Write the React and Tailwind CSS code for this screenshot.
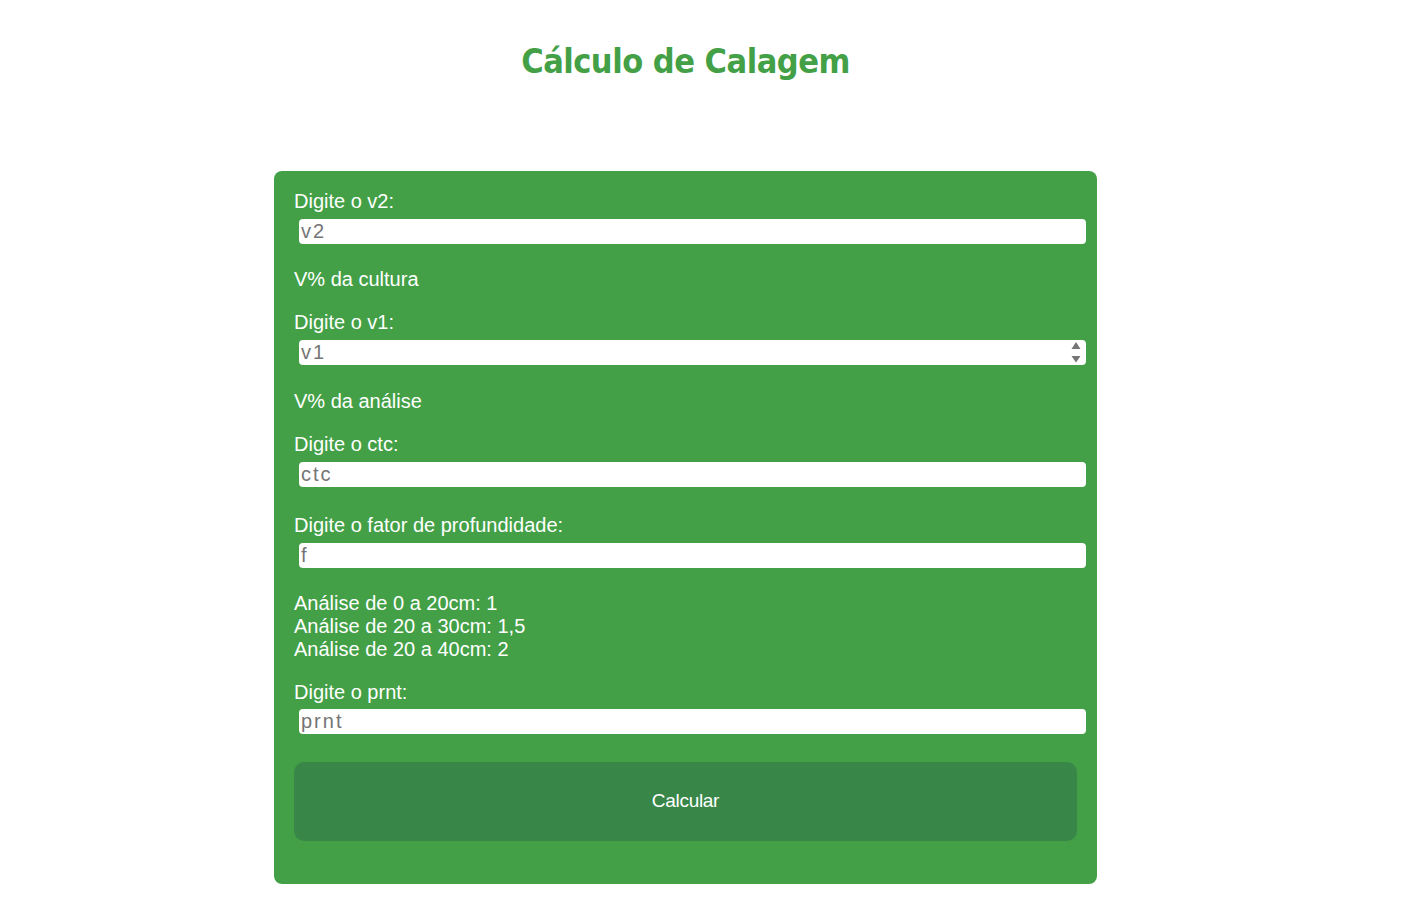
export default function App() {
  const font = { fontFamily: '"Liberation Sans", Arial, sans-serif' };
  const inputCls =
    "block ml-[5px] w-[787px] h-[25px] bg-white rounded-[4px] border-0 outline-none px-[2px] text-[20px] leading-[23px] tracking-[2px] text-[#333] placeholder:text-[#757575]";
  const labelCls = "block text-[20px] leading-[23px] text-white";
  return (
    <div className="min-h-[907px] bg-white" style={font}>
      <div className="w-[1371px]">
        <h1
          className="pt-[41px] text-center text-[34px] leading-[40px] font-bold tracking-[-0.5px] text-[#43a047]"
          style={{ fontFamily: '"DejaVu Sans Condensed", "DejaVu Sans", sans-serif' }}
        >
          Cálculo de Calagem
        </h1>
        <div className="mx-auto mt-[90px] w-[823px] h-[713px] rounded-[8px] bg-[#43a047] px-[20px] pt-[19px]">
          <label className={labelCls}>Digite o v2:</label>
          <input className={`${inputCls} mt-[6px]`} placeholder="v2" />
          <p className="mt-[24px] text-[20px] leading-[23px] text-white">V% da cultura</p>

          <label className={`${labelCls} mt-[20px]`}>Digite o v1:</label>
          <div className="relative mt-[6px]">
            <input className={inputCls} placeholder="v1" />
            <svg
              className="absolute left-[777px] top-[2px]"
              width="10"
              height="21"
              viewBox="0 0 10 21"
            >
              <polygon points="5,0 9.5,7 0.5,7" fill="#767676" />
              <polygon points="0.5,14 9.5,14 5,20.5" fill="#767676" />
            </svg>
          </div>
          <p className="mt-[25px] text-[20px] leading-[23px] text-white">V% da análise</p>

          <label className={`${labelCls} mt-[20px]`}>Digite o ctc:</label>
          <input className={`${inputCls} mt-[6px]`} placeholder="ctc" />

          <label className={`${labelCls} mt-[27px]`}>Digite o fator de profundidade:</label>
          <input className={`${inputCls} mt-[6px]`} placeholder="f" />

          <p className="mt-[24px] text-[20px] leading-[23px] text-white">
            Análise de 0 a 20cm: 1
            <br />
            Análise de 20 a 30cm: 1,5
            <br />
            Análise de 20 a 40cm: 2
          </p>

          <label className={`${labelCls} mt-[20px]`}>Digite o prnt:</label>
          <input className={`${inputCls} mt-[5px]`} placeholder="prnt" />

          <button className="mt-[28px] block w-[783px] h-[79px] rounded-[10px] bg-[#388749] text-white text-[19px] tracking-[-0.3px]">
            Calcular
          </button>
        </div>
      </div>
    </div>
  );
}
